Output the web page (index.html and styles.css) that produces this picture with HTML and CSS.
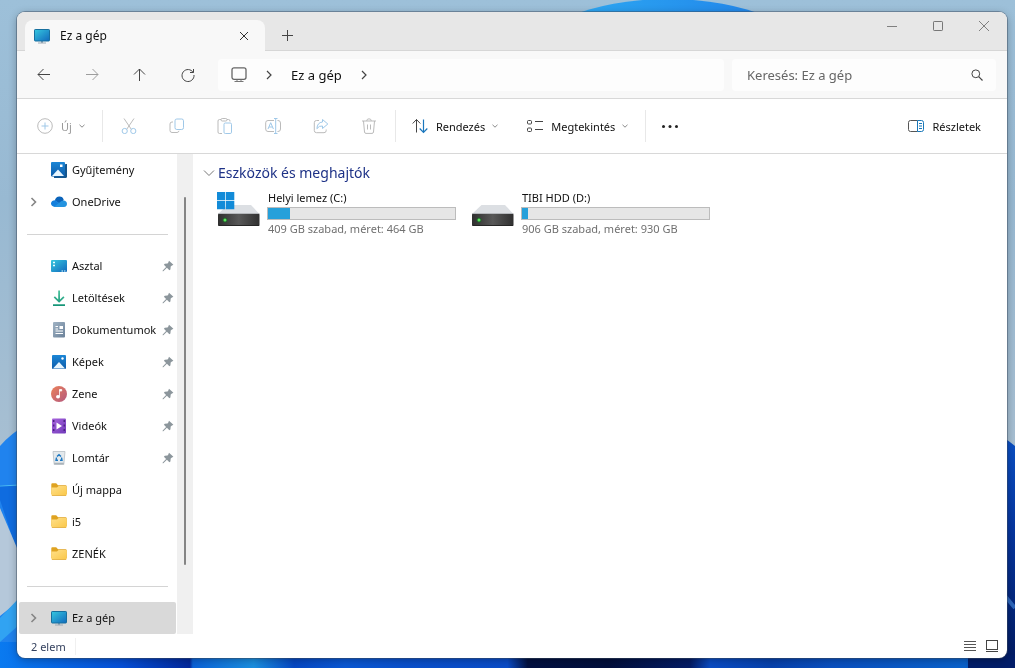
FILE: index.html
```html
<!DOCTYPE html>
<html lang="hu">
<head>
<meta charset="utf-8">
<title>Ez a gép</title>
<link rel="stylesheet" href="styles.css">
</head>
<body class="desktop">
<svg class="wallpaper" viewBox="0 0 1015 668" preserveAspectRatio="none" aria-hidden="true">
  <defs>
    <linearGradient id="sky" x1="0" y1="0" x2="0" y2="1"><stop offset="0" stop-color="#9dc0d9"/><stop offset=".3" stop-color="#98b9d2"/><stop offset="1" stop-color="#b4c4d2"/></linearGradient>
    <linearGradient id="petal" x1="0" y1="0" x2="1" y2="0"><stop offset="0" stop-color="#2fb0f4"/><stop offset="1" stop-color="#1f7de8"/></linearGradient>
    <linearGradient id="deep" x1="0" y1="0" x2="1" y2="0"><stop offset="0" stop-color="#0a7af0"/><stop offset=".12" stop-color="#0550d8"/><stop offset=".187" stop-color="#03289c"/><stop offset=".19" stop-color="#0a62d8"/><stop offset=".25" stop-color="#1a8fe0"/><stop offset=".29" stop-color="#0648c4"/><stop offset=".34" stop-color="#0a58d4"/><stop offset=".4" stop-color="#0a50cc"/><stop offset=".5" stop-color="#0a4cc8"/><stop offset=".52" stop-color="#021040"/><stop offset=".6" stop-color="#020f3c"/><stop offset=".68" stop-color="#041c66"/><stop offset=".7" stop-color="#0a4cc4"/><stop offset=".76" stop-color="#0741ac"/><stop offset=".82" stop-color="#0a50c0"/><stop offset=".95" stop-color="#0a62cc"/><stop offset="1" stop-color="#03227c"/></linearGradient>
    <linearGradient id="navy" x1="0" y1="0" x2="0" y2="1"><stop offset="0" stop-color="#0b50c4"/><stop offset=".4" stop-color="#0636a0"/><stop offset="1" stop-color="#021a60"/></linearGradient>
  </defs>
  <rect width="1015" height="668" fill="url(#sky)"/>
  <ellipse cx="668" cy="62" rx="142" ry="63" fill="url(#petal)"/>
  <path d="M0 446Q10 434 30 422V668H0Z" fill="#2083ee"/>
  <path d="M0 485H20V560L0 500Z" fill="#0f6ce0"/>
  <path d="M0 508L20 555V600L0 616Z" fill="#b5c8da"/>
  <path d="M0 618L20 597V624L0 642Z" fill="#31a3f2"/>
  <path d="M0 486L20 485" stroke="#4bbcf6"/>
  <rect y="642" width="1015" height="26" fill="url(#deep)"/>
  <path d="M1000 436Q1008 440 1015 446V668H1000Z" fill="url(#navy)"/>
  <path d="M1005 596L1015 608" stroke="#2d66bb" stroke-width="4"/>
  <path d="M968 668V655H1015V668Z" fill="#021d69"/>
</svg>

<svg class="sprite" aria-hidden="true">
  <defs>
    <linearGradient id="screen" x1="0" y1="0" x2="1" y2="1"><stop offset="0" stop-color="#35c8df"/><stop offset="1" stop-color="#1269bd"/></linearGradient>
    <linearGradient id="photo" x1="0" y1="0" x2="0" y2="1"><stop offset="0" stop-color="#1b86d6"/><stop offset="1" stop-color="#0d5caa"/></linearGradient>
    <linearGradient id="down" x1="0" y1="0" x2="0" y2="1"><stop offset="0" stop-color="#4dc49e"/><stop offset="1" stop-color="#149477"/></linearGradient>
    <linearGradient id="doc" x1="0" y1="0" x2="1" y2="1"><stop offset="0" stop-color="#a0b3c4"/><stop offset="1" stop-color="#6b8199"/></linearGradient>
    <linearGradient id="music" x1="0" y1="0" x2="1" y2="1"><stop offset="0" stop-color="#ec8159"/><stop offset="1" stop-color="#b3597f"/></linearGradient>
    <linearGradient id="video" x1="0" y1="0" x2="1" y2="1"><stop offset="0" stop-color="#a763dc"/><stop offset="1" stop-color="#713bba"/></linearGradient>
    <linearGradient id="folder" x1="0" y1="0" x2="1" y2="1"><stop offset="0" stop-color="#ffe08a"/><stop offset="1" stop-color="#fac748"/></linearGradient>
    <linearGradient id="metal" x1="0" y1="0" x2="1" y2="0"><stop offset="0" stop-color="#2f2f2f"/><stop offset=".5" stop-color="#585858"/><stop offset="1" stop-color="#303030"/></linearGradient>
  </defs>
  <symbol id="i-pc" viewBox="0 0 16 16"><path d="M7 12h2v3H7z" fill="#8ea3b5"/><path d="M4 15h8" stroke="#9caab5"/><rect x=".5" y="1.5" width="15" height="11.500" rx=".7" fill="url(#screen)" stroke="#176f9e"/></symbol>
  <symbol id="i-pin" viewBox="0 0 12 12"><path d="M7 .7L11.400 4.800 9.600 5.700 8.700 6.600 8.400 9.500 7.400 10.200 4.900 7.800 1.300 11.200.6 11.300.7 10.500 4.100 7.100 1.900 4.700 2.800 3.700 5.500 3.400 6.200 2.700Z" fill="#8c969c"/></symbol>
  <symbol id="i-folder" viewBox="0 0 16 16"><path d="M.3 2.500Q.3 1.300 1.300 1.300H5.200L7 3.200H14.500Q15.700 3.200 15.700 4.500V12H.3Z" fill="#dfa321"/><path d="M.3 5.500H6L7.600 4H14.700Q15.700 4 15.700 5V12.700Q15.700 13.700 14.700 13.700H1.300Q.3 13.700.3 12.700Z" fill="url(#folder)"/><path d="M1 13.500H15" stroke="#dda638" stroke-width=".7"/></symbol>
  <symbol id="i-expand" viewBox="0 0 8 12"><path d="M1.500 2L5.500 6 1.500 10" fill="none" stroke="#858585" stroke-width="1.600"/></symbol>
  <symbol id="i-drop" viewBox="0 0 8 8"><path d="M1.500 2.800L4 5.200 6.500 2.800" fill="none" stroke="#8b8b8b"/></symbol>
  <symbol id="i-drive" viewBox="0 0 44 36"><path d="M10.500 14H34L42.500 23H1Z" fill="#dcdfe3"/><path d="M1 23H42.500" stroke="#8f9194"/><rect x="1" y="23" width="41.500" height="12" rx=".7" fill="url(#metal)"/><path d="M2 34.500H42" stroke="#252525"/><circle cx="8" cy="29" r="2.500" fill="#245c2c"/><circle cx="8" cy="29" r="1.500" fill="#59e65b"/></symbol>
</svg>

<main class="window">
  <header class="titlebar">
    <div class="tab">
      <svg class="icon16"><use href="#i-pc"/></svg>
      <span class="tab-title">Ez a gép</span>
      <button class="tab-close" aria-label="Lap bezárása"><svg width="10" height="10" viewBox="0 0 10 10"><path d="M1 1L9 9M9 1L1 9" stroke="#333" fill="none"/></svg></button>
    </div>
    <button class="tab-new" aria-label="Új lap"><svg width="11" height="11" viewBox="0 0 11 11"><path d="M5.500 0V11M0 5.500H11" stroke="#444"/></svg></button>
    <div class="caption">
      <button aria-label="Kis méret"><svg width="12" height="12" viewBox="0 0 12 12"><path d="M1 6.500H11" stroke="#808080"/></svg></button>
      <button aria-label="Teljes méret"><svg width="12" height="12" viewBox="0 0 12 12"><rect x="1.500" y="1.500" width="9" height="9" rx=".7" fill="none" stroke="#777"/></svg></button>
      <button aria-label="Bezárás"><svg width="12" height="12" viewBox="0 0 12 12"><path d="M1 1L11 11M11 1L1 11" stroke="#808080"/></svg></button>
    </div>
  </header>

  <nav class="navbar" aria-label="Navigáció">
    <button class="nav-btn" aria-label="Vissza"><svg class="icon16 line" viewBox="0 0 16 16"><path d="M14 7.500H2M7.500 2L2 7.500 7.500 13"/></svg></button>
    <button class="nav-btn dim" aria-label="Előre"><svg class="icon16 line" viewBox="0 0 16 16"><path d="M2 7.500H14M8.500 2L14 7.500 8.500 13"/></svg></button>
    <button class="nav-btn" aria-label="Fel"><svg class="icon16 line" viewBox="0 0 16 16"><path d="M7.500 14V2M2 7.500L7.500 2 13 7.500"/></svg></button>
    <button class="nav-btn" aria-label="Frissítés"><svg class="icon16 line" viewBox="0 0 16 16"><path d="M13.200 5.500A6 6 0 1 0 14 8M13.500 2V5.500H10"/></svg></button>
    <div class="address">
      <svg class="icon16 crumb-pc" viewBox="0 0 16 16"><rect x="1" y=".8" width="14" height="11.500" rx="2" fill="none" stroke="#666" stroke-width="1.300"/><path d="M6 12.500V14.500M10 12.500V14.500M3.500 14.500H12.500" stroke="#777" fill="none"/></svg>
      <svg class="crumb-arrow" viewBox="0 0 8 12"><path d="M2 2L6 6 2 10"/></svg>
      <a class="crumb" href="#pc">Ez a gép</a>
      <svg class="crumb-arrow" viewBox="0 0 8 12"><path d="M2 2L6 6 2 10"/></svg>
    </div>
    <label class="search">
      <input type="search" placeholder="Keresés: Ez a gép" aria-label="Keresés: Ez a gép">
      <svg width="12" height="12" viewBox="0 0 12 12"><circle cx="4.800" cy="4.800" r="3.900" fill="none" stroke="#444"/><path d="M7.700 7.700L11.500 11.500" stroke="#444" stroke-width="1.200"/></svg>
    </label>
  </nav>

  <div class="toolbar">
    <button class="tool new" disabled><svg class="icon16 soft" viewBox="0 0 16 16"><circle cx="8" cy="8" r="7.300"/><path class="blue" d="M8 4.500V11.500M4.500 8H11.500"/></svg><span>Új</span><svg class="drop"><use href="#i-drop"/></svg></button>
    <span class="rule"></span>
    <div class="tool-set">
      <button class="tool-icon" disabled aria-label="Kivágás"><svg class="icon16 soft" viewBox="0 0 16 16"><path d="M3 .5L10.300 11.300M13 .5L5.700 11.300"/><circle class="blue" cx="3.700" cy="13" r="2.600"/><circle class="blue" cx="12.300" cy="13" r="2.600"/></svg></button>
      <button class="tool-icon" disabled aria-label="Másolás"><svg class="icon16 soft" viewBox="0 0 16 16"><path d="M4 4H3Q1 4 1 6V12.500Q1 14.500 3 14.500H8Q9.700 14.500 10 12.800"/><rect class="blue" x="6" y="1" width="8.500" height="10.500" rx="1.800"/></svg></button>
      <button class="tool-icon" disabled aria-label="Beillesztés"><svg class="icon16 soft" viewBox="0 0 16 16"><path d="M5 15.500H2.500Q1 15.500 1 14V3Q1 1.500 2.500 1.500H4M10 1.500H11.500Q13 1.500 13 3V3.500"/><rect x="4" y=".5" width="6" height="2.500" rx="1.200"/><rect class="blue" x="7" y="5" width="7.500" height="10.500" rx="1.300"/></svg></button>
      <button class="tool-icon" disabled aria-label="Átnevezés"><svg class="icon16 soft" viewBox="0 0 16 16"><path d="M9 2.500H3Q.7 2.500.7 4.800V11Q.7 13.500 3 13.500H9M12.500 2.500H13Q15.500 2.500 15.500 5V11Q15.500 13.500 13 13.500H12.500"/><path class="blue" d="M3 11L5.700 4.700 8.400 11M4 9H7.500M10.700 .5V15.500M9 .5H12.500M9 15.500H12.500"/></svg></button>
      <button class="tool-icon" disabled aria-label="Megosztás"><svg class="icon16 soft" viewBox="0 0 16 16"><path d="M6 2.500H3.500Q1.300 2.500 1.300 4.700V12.500Q1.300 14.700 3.500 14.700H11Q13.200 14.700 13.200 12.500V11.500"/><path class="blue" d="M9.500 1.500L14.800 6 9.500 10.500V8Q6 7.500 3.900 10.700 4.200 4.500 9.500 4Z"/></svg></button>
      <button class="tool-icon" disabled aria-label="Törlés"><svg class="icon16 soft" viewBox="0 0 16 16"><path d="M1 3H15M5.700 3Q5.700 .8 8 .8T10.300 3M2.500 3L3.500 14Q3.700 15.400 5 15.400H11Q12.300 15.400 12.500 14L13.500 3M6.500 6.500V11.500M9.500 6.500V11.500"/></svg></button>
    </div>
    <span class="rule"></span>
    <button class="tool"><svg class="icon16 line" viewBox="0 0 16 16"><path d="M4.500 14.500V1.500M.7 5.500L4.500 1.500 8.300 5.500"/><path stroke="#1976bd" stroke-width="1.200" d="M11.500 1.500V14M7.700 10.500L11.500 14.300 15.300 10.500"/></svg><span>Rendezés</span><svg class="drop"><use href="#i-drop"/></svg></button>
    <button class="tool view"><svg class="icon16 line" viewBox="0 0 16 16"><rect x=".5" y="2.500" width="4" height="3.500" rx="1"/><rect x=".5" y="10" width="4" height="3.500" rx="1"/><path d="M8 3.500H16M8 11.500H16"/></svg><span>Megtekintés</span><svg class="drop"><use href="#i-drop"/></svg></button>
    <span class="rule"></span>
    <button class="tool-icon" aria-label="További lehetőségek"><svg class="icon16" viewBox="0 0 16 16" fill="#222"><circle cx="1.500" cy="8.500" r="1.500"/><circle cx="8" cy="8.500" r="1.500"/><circle cx="14.500" cy="8.500" r="1.500"/></svg></button>
    <button class="tool details"><svg class="icon16" viewBox="0 0 16 16" fill="none"><path d="M9.500 2.500H2.500Q.5 2.500.5 4.500V11.500Q.5 13.500 2.500 13.500H9.500" stroke="#555"/><path d="M9.500 2.500H13.500Q15.500 2.500 15.500 4.500V11.500Q15.500 13.500 13.500 13.500H9.500ZM11 5.500H14M11 8H14M11 10.500H14" stroke="#1977b8"/></svg><span>Részletek</span></button>
  </div>

  <div class="content">
    <aside class="sidebar">
      <a class="item" href="#gallery"><span class="twist"></span><svg class="icon16" viewBox="0 0 16 16"><path d="M14.500 2H16V14.500Q16 16 14.500 16H3V14.500" fill="#15568d"/><rect width="14" height="14.500" rx="1" fill="url(#photo)"/><path d="M1 14L7 7.500 13 14Z" fill="#e7f6ff"/><rect x="9" y="2.500" width="2.500" height="2.500" fill="#fff"/></svg><span class="name">Gyűjtemény</span></a>
      <a class="item" href="#onedrive"><span class="twist"><svg><use href="#i-expand"/></svg></span><svg class="icon16" viewBox="0 0 16 16"><path d="M3.800 6.500Q5 2.500 8.500 2.600 11.800 2.600 12.800 6L9 10Z" fill="#0b64ba"/><path d="M4 12.900Q0 12.500 0 9.200 .5 6 4.500 6.200L13 12.900Z" fill="#137fdc"/><path d="M3 12.700L10.500 7Q12 6 14 6.700 16 7.500 16 9.800 16 12.900 13 12.900H4Q3.400 12.900 3 12.700Z" fill="#2493df"/></svg><span class="name">OneDrive</span></a>
      <hr>
      <a class="item" href="#desktop"><span class="twist"></span><svg class="icon16" viewBox="0 0 16 16"><rect y="2" width="16" height="12" rx="1" fill="url(#screen)"/><path d="M2 4.500H4M2 7.500H4" stroke="#e9ffff" stroke-width="1.500"/><path d="M10.500 13H12M13 13H14.500" stroke="#dff"/></svg><span class="name">Asztal</span><svg class="pin"><use href="#i-pin"/></svg></a>
      <a class="item" href="#downloads"><span class="twist"></span><svg class="icon16" viewBox="0 0 16 16"><path d="M7.200 .5H9V9.500L12.300 6.300 13.500 7.500 8.100 12.800 2.700 7.500 3.900 6.300 7.200 9.500ZM2 14.200H14V16H2Z" fill="url(#down)"/></svg><span class="name">Letöltések</span><svg class="pin"><use href="#i-pin"/></svg></a>
      <a class="item" href="#documents"><span class="twist"></span><svg class="icon16" viewBox="0 0 16 16"><rect x="2" y="0" width="12" height="15.500" rx="1" fill="url(#doc)"/><path d="M4.500 4.500H7M4.500 7H7M4.500 9H12M4.500 11.500H12" stroke="#fff"/><rect x="8.500" y="4" width="3.500" height="3" fill="#fff"/></svg><span class="name">Dokumentumok</span><svg class="pin"><use href="#i-pin"/></svg></a>
      <a class="item" href="#pictures"><span class="twist"></span><svg class="icon16" viewBox="0 0 16 16"><rect x="1" y="1" width="14" height="14" rx="1" fill="url(#photo)"/><path d="M2 14.500L8 8 14 14.500Z" fill="#e7f6ff"/><circle cx="11.500" cy="4.500" r="1.200" fill="#fff"/></svg><span class="name">Képek</span><svg class="pin"><use href="#i-pin"/></svg></a>
      <a class="item" href="#music"><span class="twist"></span><svg class="icon16" viewBox="0 0 16 16"><circle cx="8" cy="8" r="8" fill="url(#music)"/><ellipse cx="7" cy="10.700" rx="2" ry="1.700" fill="#fff"/><path d="M8.500 10.700V3.500H10.700V5H8.500" fill="#fff" stroke="#fff" stroke-width=".8"/></svg><span class="name">Zene</span><svg class="pin"><use href="#i-pin"/></svg></a>
      <a class="item" href="#videos"><span class="twist"></span><svg class="icon16" viewBox="0 0 16 16"><rect x="1" y=".5" width="14" height="15" rx="1" fill="url(#video)"/><path d="M2.700 2V14M13.300 2V14" stroke="#4c2383" stroke-width="1.500" stroke-dasharray="2 2.500"/><path d="M5.500 4.500L11 8 5.500 11.500Z" fill="#fff"/></svg><span class="name">Videók</span><svg class="pin"><use href="#i-pin"/></svg></a>
      <a class="item" href="#bin"><span class="twist"></span><svg class="icon16" viewBox="0 0 16 16"><path d="M2 1.500H14L12.800 14.500H3.200Z" fill="#e4e9ec" stroke="#b6bec4" stroke-width=".8"/><path d="M3.200 13.500H12.800" stroke="#aab3b9" stroke-width="1.500"/><path d="M6 6.500L8 4.700 10 6.500M10.500 7.500L11 10.300H9M7 10.300H5L5.500 7.500" fill="none" stroke="#1c78c3" stroke-width="1.400"/></svg><span class="name">Lomtár</span><svg class="pin"><use href="#i-pin"/></svg></a>
      <a class="item" href="#new"><span class="twist"></span><svg class="icon16"><use href="#i-folder"/></svg><span class="name">Új mappa</span></a>
      <a class="item" href="#i5"><span class="twist"></span><svg class="icon16"><use href="#i-folder"/></svg><span class="name">i5</span></a>
      <a class="item" href="#zenek"><span class="twist"></span><svg class="icon16"><use href="#i-folder"/></svg><span class="name">ZENÉK</span></a>
      <hr>
      <a class="item selected" href="#pc"><span class="twist"><svg><use href="#i-expand"/></svg></span><svg class="icon16"><use href="#i-pc"/></svg><span class="name">Ez a gép</span></a>
    </aside>
    <div class="scrollbar"><span class="thumb"></span></div>
    <section class="files">
      <h1 class="group"><svg width="12" height="8" viewBox="0 0 12 8"><path d="M1 1.500L6 6.500 11 1.500" fill="none" stroke="#777"/></svg>Eszközök és meghajtók</h1>
      <div class="drives">
        <article class="drive">
          <svg class="drive-icon" viewBox="0 0 44 36"><use href="#i-drive"/><path d="M0 1H8.300V9.300H0ZM9 1H17.300V9.300H9ZM0 10H8.300V18.300H0ZM9 10H17.300V18.300H9Z" fill="#128bd8"/></svg>
          <div class="drive-info">
            <span class="drive-name">Helyi lemez (C:)</span>
            <div class="meter"><span style="width:12%"></span></div>
            <span class="drive-free">409 GB szabad, méret: 464 GB</span>
          </div>
        </article>
        <article class="drive">
          <svg class="drive-icon" viewBox="0 0 44 36"><use href="#i-drive"/></svg>
          <div class="drive-info">
            <span class="drive-name">TIBI HDD (D:)</span>
            <div class="meter"><span style="width:3%"></span></div>
            <span class="drive-free">906 GB szabad, méret: 930 GB</span>
          </div>
        </article>
      </div>
    </section>
  </div>

  <footer class="status">
    <span class="count">2 elem</span>
    <button aria-label="Részletek nézet"><svg width="14" height="12" viewBox="0 0 14 12"><path d="M1 1.500H13M1 4.500H13M1 7.500H13M1 10.500H13" stroke="#555"/></svg></button>
    <button aria-label="Nagy ikonok"><svg width="14" height="12" viewBox="0 0 14 12"><rect x="1.500" y=".5" width="11" height="9" fill="none" stroke="#444"/><path d="M1 11.500H13" stroke="#444"/></svg></button>
  </footer>
</main>
</body>
</html>
```

FILE: styles.css
```css
* { box-sizing: border-box; }
.desktop {
  margin: 0;
  min-height: 100vh;
  padding: 12px 8px 10px 17px;
  display: flex;
  font: 11px/16px "Noto Sans", "Open Sans", sans-serif;
  color: #111;
}
.wallpaper { position: fixed; inset: 0; width: 100%; height: 100%; z-index: -1; }
.sprite { position: absolute; width: 0; height: 0; }
button { border: 0; padding: 0; margin: 0; background: none; font: inherit; color: inherit; display: flex; align-items: center; justify-content: center; }
a { color: inherit; text-decoration: none; }
svg { flex: none; display: block; }
.icon16 { width: 16px; height: 16px; }
.line { fill: none; stroke: #444; }
.soft { fill: none; stroke: #bbb; }
.soft .blue { stroke: #9fc8e8; }

.window {
  flex: 1;
  min-width: 0;
  display: flex;
  flex-direction: column;
  background: #fff;
  border-radius: 8px;
  overflow: hidden;
  box-shadow: 0 0 0 1px rgba(60, 75, 95, .45), 0 2px 8px rgba(0, 0, 0, .3);
}
.titlebar { height: 39px; flex: none; display: flex; background: #e7e7e7; padding-left: 8px; box-shadow: inset 0 -1px #d6d6d6; }
.tab { width: 240px; margin-top: 8px; padding: 0 16px 0 9px; display: flex; align-items: center; gap: 10px; background: #f8f8f8; border-radius: 8px 8px 0 0; }
.tab-title { flex: 1; font-size: 12px; color: #111; }
.tab-new { width: 44px; padding-top: 8px; }
.caption { margin-left: auto; display: flex; height: 28px; }
.caption button { width: 46px; }

.navbar { height: 48px; flex: none; display: flex; align-items: center; padding: 0 11px 0 3px; background: #f8f8f8; border-bottom: 1px solid #d8d8d8; }
.nav-btn { width: 48px; height: 32px; }
.dim { opacity: .5; }
.address { flex: 1; height: 32px; margin: 0 8px 0 6px; padding-left: 13px; display: flex; align-items: center; background: #fdfdfd; border-radius: 4px; font-size: 13px; }
.crumb-arrow { width: 8px; height: 12px; margin: 0 18px; fill: none; stroke: #444; stroke-width: 1.2; }
.search { width: 264px; height: 32px; padding: 0 13px 0 15px; display: flex; align-items: center; background: #fdfdfd; border-radius: 4px; }
.search input { flex: 1; min-width: 0; border: 0; padding: 0; outline: 0; background: none; font: inherit; font-size: 13px; }
.search input::placeholder { color: #666; opacity: 1; }

.toolbar { height: 55px; flex: none; display: flex; align-items: center; padding: 0 10px 0 20px; border-bottom: 1px solid #d8d8d8; }
.tool { gap: 8px; height: 32px; padding: 0 16px; }
.tool span { padding-top: 1px; }
.tool.new { color: #999; padding: 0 16px 0 0; }
.tool .drop { width: 8px; height: 8px; margin-left: -2px; }
.tool.view { padding: 0 16px 0 12px; }
.tool.details { margin-left: auto; }
.rule { width: 1px; height: 32px; background: #e8e8e8; }
.tool-set { display: flex; padding: 0 2px; }
.tool-icon { width: 48px; height: 32px; }

.content { flex: 1; display: flex; min-height: 0; }
.sidebar { width: 160px; flex: none; }
.item { height: 32px; display: flex; align-items: center; padding-right: 3px; }
.item.selected { background: #d9d9d9; margin: 0 1px 0 2px; border-radius: 2px; }
.twist { width: 34px; flex: none; display: flex; justify-content: center; }
.twist svg { width: 8px; height: 12px; }
.selected .twist { width: 32px; padding-right: 2px; }
.name { flex: 1; padding-left: 5px; white-space: nowrap; }
.pin { width: 12px; height: 12px; }
hr { border: 0; height: 1px; margin: 16px 9px 15px 10px; background: #d4d4d4; }
.scrollbar { width: 16px; background: #f0f0f0; flex: none; padding: 43px 7px 69px; display: flex; }
.thumb { flex: 1; background: #858585; border-radius: 1px; }
.files { flex: 1; padding: 10px 10px 0; }
.group { margin: 0; display: flex; align-items: center; gap: 3px; font-size: 14px; line-height: 18px; font-weight: 400; color: #1e3287; }
.drives { display: flex; flex-wrap: wrap; padding: 8px 0 0 14px; gap: 15px; }
.drive { display: flex; gap: 6px; }
.drive-icon { width: 44px; height: 36px; margin-top: 1px; }
.drive-info { width: 189px; }
.drive-name, .drive-free { display: block; line-height: 16px; padding-left: 1px; white-space: nowrap; }
.drive-free { color: #707070; }
.meter { height: 13px; margin: 1px 0; border: 1px solid #bcbcbc; background: #e6e6e6; }
.meter span { display: block; height: 100%; background: #26a0da; }
.status { height: 24px; flex: none; display: flex; align-items: center; gap: 8px; padding: 0 8px 0 14px; color: #34415e; }
.count { padding: 1px 9px 0 0; margin-right: auto; border-right: 1px solid #f0f0f0; }
```
